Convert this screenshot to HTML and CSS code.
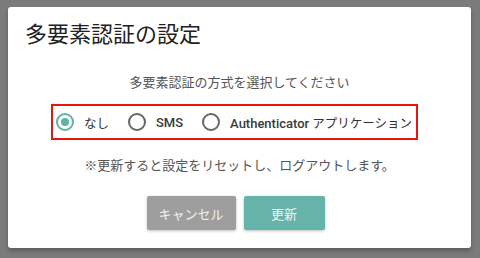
FILE: index.html
```html
<!DOCTYPE html>
<html lang="ja">
<head>
  <meta charset="UTF-8" />
  <meta name="viewport" content="width=device-width, initial-scale=1.0"/>
  <title>多要素認証の設定</title>
  <link rel="stylesheet" href="styles.css">
</head>
<body>
  <div class="dialog">
    <h2 class="dialog-title">多要素認証の設定</h2>

    <div class="dialog-body">
      <p class="lead">多要素認証の方式を選択してください</p>

      <div class="method-box">
        <label class="radio checked">
          <span class="radio-mark"></span>
          <span class="radio-label">なし</span>
        </label>
        <label class="radio">
          <span class="radio-mark"></span>
          <span class="radio-label latin">SMS</span>
        </label>
        <label class="radio">
          <span class="radio-mark"></span>
          <span class="radio-label"><span class="latin">Authenticator</span> アプリケーション</span>
        </label>
      </div>

      <p class="note">※更新すると設定をリセットし、ログアウトします。</p>

      <div class="actions">
        <button class="btn btn-cancel">キャンセル</button>
        <button class="btn btn-primary">更新</button>
      </div>
    </div>
  </div>
</body>
</html>
```

FILE: styles.css
```css
html, body {
  height: 100%;
}

body {
  margin: 0;
  background-color: #7b7b7b;
  font-family: Roboto, "Noto Sans CJK JP", sans-serif;
  color: #333;
  overflow: hidden;
}

.dialog {
  margin: 7px 0 0 8px;
  width: 463px;
  height: 241px;
  background-color: #fff;
  border-radius: 3px;
  box-shadow: 0 3px 4px rgba(0, 0, 0, 0.25);
  box-sizing: border-box;
}

.dialog-title {
  margin: 0;
  padding: 13px 17px 0;
  font-size: 22px;
  line-height: 30px;
  font-weight: 400;
  color: #212121;
}

.dialog-body {
  display: flex;
  flex-direction: column;
  align-items: center;
}

.lead {
  margin: 25px 0 0;
  font-size: 13px;
  line-height: 16px;
  color: #555;
}

.method-box {
  display: flex;
  align-items: center;
  margin: 13px 10px 0 0;
  padding: 0 4px 0 3px;
  height: 32px;
  border: 2px solid #e8160f;
}

.radio {
  display: flex;
  align-items: center;
  gap: 10px;
  margin-right: 19px;
  cursor: pointer;
}

.radio:last-child {
  margin-right: 0;
}

.radio-mark {
  width: 14px;
  height: 14px;
  border: 2px solid #666;
  border-radius: 50%;
  display: flex;
  align-items: center;
  justify-content: center;
}

.radio.checked .radio-mark {
  border-color: #5fb3a6;
}

.radio.checked .radio-mark::after {
  content: "";
  width: 8px;
  height: 8px;
  border-radius: 50%;
  background-color: #5fb3a6;
}

.radio-label {
  font-size: 12.5px;
  color: #333;
}

.latin {
  font-size: 13px;
  font-weight: 500;
  color: #3a3a3a;
}

.note {
  margin: 17px 0 0;
  font-size: 13px;
  line-height: 17px;
  color: #555;
}

.actions {
  display: flex;
  gap: 8px;
  margin: 22px 8px 0 0;
}

.btn {
  height: 34px;
  border: none;
  border-radius: 2px;
  font-family: Roboto, "Noto Sans CJK JP", sans-serif;
  font-size: 13px;
  color: #f2f2f2;
  box-shadow: 0 1px 3px rgba(0, 0, 0, 0.25);
  cursor: pointer;
}

.btn-cancel {
  width: 89px;
  background-color: #9e9e9e;
}

.btn-primary {
  width: 81px;
  background-color: #66b3a9;
}
```
